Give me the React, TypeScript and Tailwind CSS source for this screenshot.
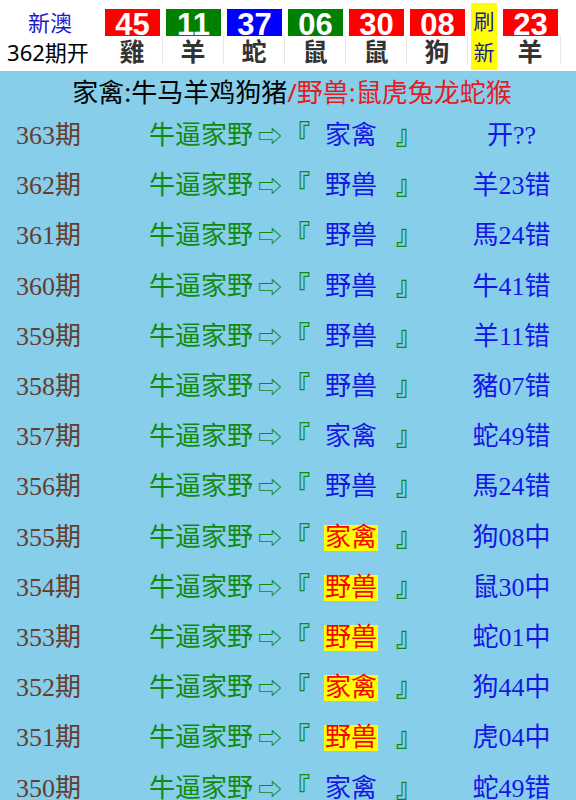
import React from 'react'

const balls = [
  { n: '45', z: '雞', c: 'bg-[#ff0000]' },
  { n: '11', z: '羊', c: 'bg-[#008000]' },
  { n: '37', z: '蛇', c: 'bg-[#0000ff]' },
  { n: '06', z: '鼠', c: 'bg-[#008000]' },
  { n: '30', z: '鼠', c: 'bg-[#ff0000]' },
  { n: '08', z: '狗', c: 'bg-[#ff0000]' },
]

const rows = [
  { p: '363', t: '家禽', r: '开??', hit: false },
  { p: '362', t: '野兽', r: '羊23错', hit: false },
  { p: '361', t: '野兽', r: '馬24错', hit: false },
  { p: '360', t: '野兽', r: '牛41错', hit: false },
  { p: '359', t: '野兽', r: '羊11错', hit: false },
  { p: '358', t: '野兽', r: '豬07错', hit: false },
  { p: '357', t: '家禽', r: '蛇49错', hit: false },
  { p: '356', t: '野兽', r: '馬24错', hit: false },
  { p: '355', t: '家禽', r: '狗08中', hit: true },
  { p: '354', t: '野兽', r: '鼠30中', hit: true },
  { p: '353', t: '野兽', r: '蛇01中', hit: true },
  { p: '352', t: '家禽', r: '狗44中', hit: true },
  { p: '351', t: '野兽', r: '虎04中', hit: true },
  { p: '350', t: '家禽', r: '蛇49错', hit: false },
]

const sans = "font-['Noto_Sans','Noto_Sans_CJK_SC',sans-serif]"
const serif = "font-['Liberation_Serif','Noto_Sans_CJK_SC',serif]"

function Ball({ n, z, c }: { n: string; z: string; c: string }) {
  return (
    <div className="flex flex-col w-[55px] shrink-0">
      <div className={`${c} h-[27px] mt-[9px] pt-[2px] text-center text-white font-bold text-[31px] leading-[27px] font-['Liberation_Sans',sans-serif]`}>{n}</div>
      <div className="h-[28px] w-[58px] border-r border-[#e6e6e6] pr-[3px] text-center text-[#333] font-bold text-[25px] leading-[30px]">{z}</div>
    </div>
  )
}

export default function App() {
  return (
    <div className={`w-[576px] h-[800px] overflow-hidden bg-[#87ceeb] ${sans}`}>
      <div className="h-[71px] bg-white flex">
        <div className="w-[100px] flex flex-col items-center pt-[7px]">
          <div className="text-[#1c1ccc] text-[22px] leading-[30px]">新澳</div>
          <div className="text-black text-[22px] leading-[30px] -ml-[4px]">362期开</div>
        </div>
        <div className="flex gap-[6px] pl-[5px]">
          {balls.map((b, i) => <Ball key={i} {...b} />)}
          <div className="w-[26px] h-[67px] mt-[3px] bg-[#ffff00] text-[#1c1c99] text-[21px] leading-[31px] flex flex-col items-center pt-[3px]">
            <span>刷</span>
            <span>新</span>
          </div>
          <Ball n="23" z="羊" c="bg-[#ff0000]" />
        </div>
      </div>

      <div className="h-[40px] flex items-center justify-center text-[26px] leading-none pt-[2px] pl-[8px]">
        <span className="text-black">家禽:牛马羊鸡狗猪</span>
        <span className="text-[#e31b23]">/野兽:鼠虎兔龙蛇猴</span>
      </div>

      <div className={serif}>
        {rows.map((r) => (
          <div key={r.p} className="h-[50.2px] flex items-center text-[26px] leading-none">
            <div className="w-[149px] pl-[16px] text-[#663c2c]">{r.p}期</div>
            <div className="w-[280px] flex items-center text-[#108a10]">
              <span>牛逼家野</span>
              <span className={`${sans} text-[24px] ml-[5px] mr-[2px]`}>⇨</span>
              <span className="font-bold">『</span>
              <span className={`ml-[14px] px-[1px] ${r.hit ? 'bg-[#ffff00] text-[#ff0000]' : 'text-[#1616e6]'}`}>{r.t}</span>
              <span className="ml-[18px] font-bold">』</span>
            </div>
            <div className="flex-1 text-center text-[#1616e6] pl-[18px]">{r.r}</div>
          </div>
        ))}
      </div>
    </div>
  )
}
